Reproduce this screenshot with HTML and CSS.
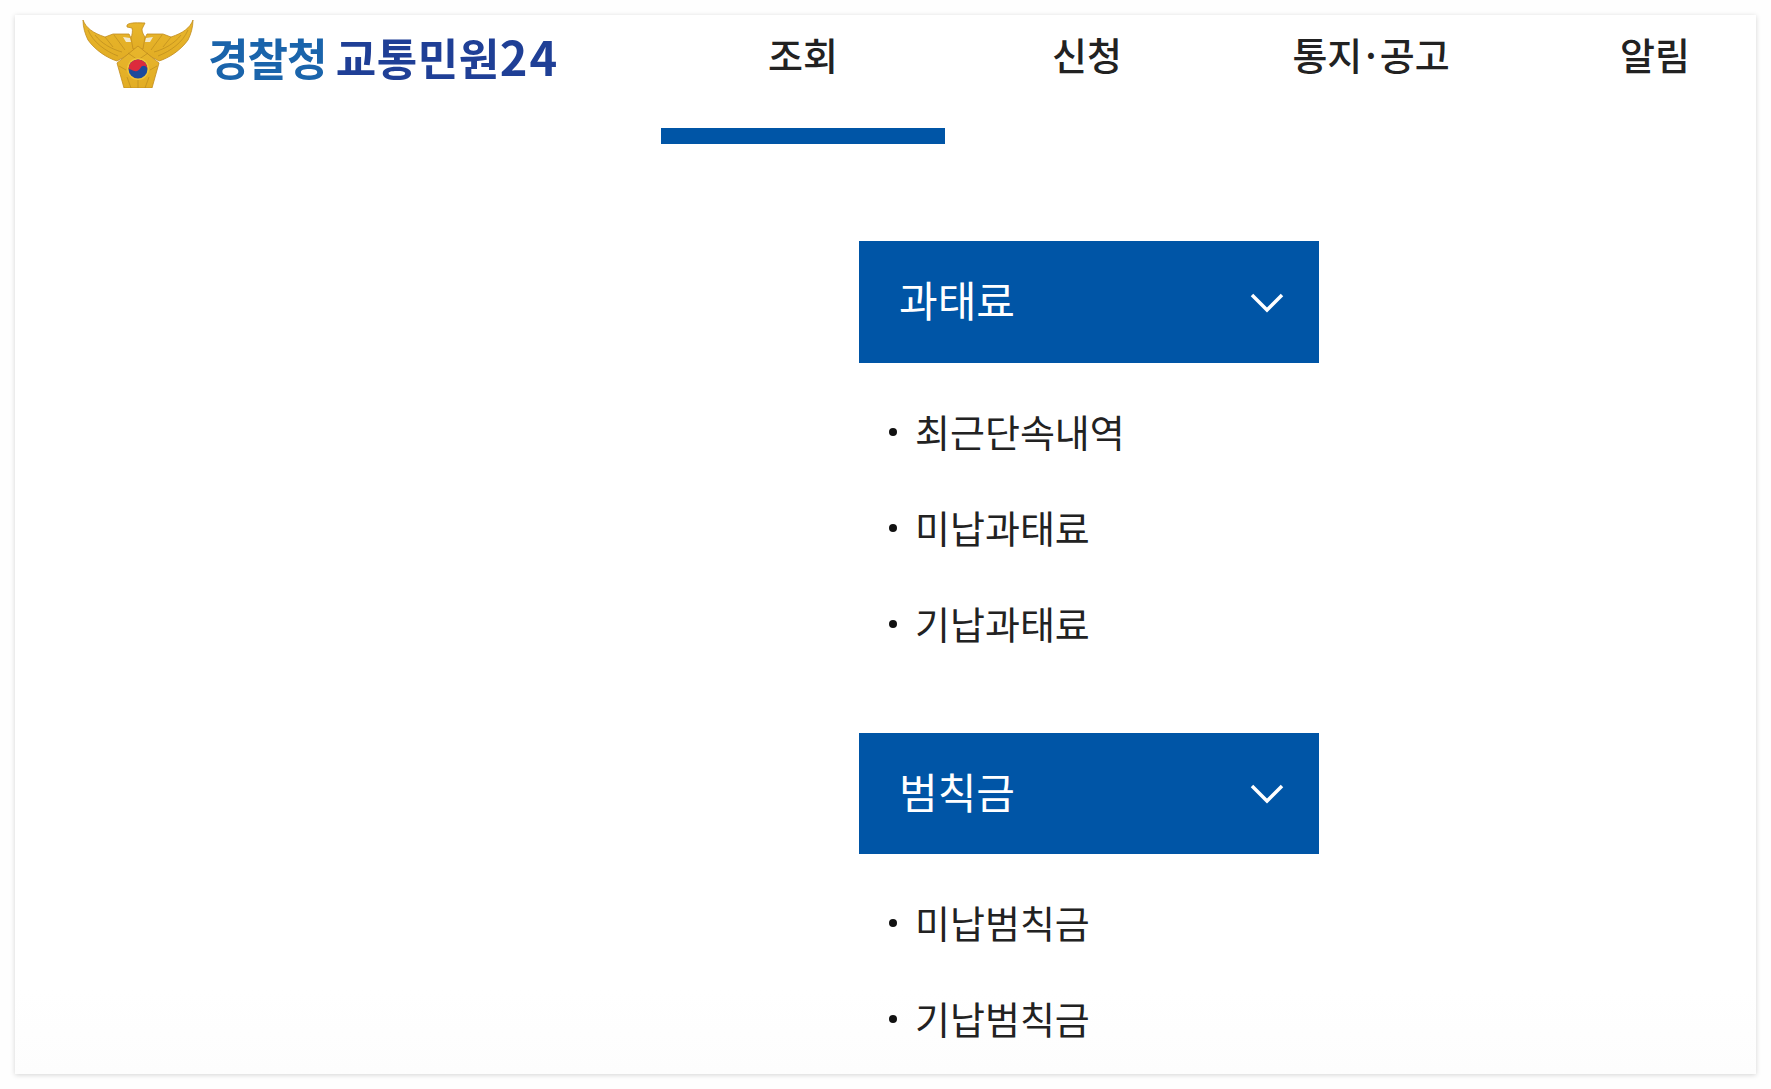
FILE: index.html
```html
<!DOCTYPE html>
<html lang="ko">
<head>
<meta charset="utf-8">
<title>경찰청 교통민원24</title>
<link rel="stylesheet" href="styles.css">
</head>
<body>
<main class="panel">
  <header class="header">
    <a class="logo" href="#">
      <svg class="emblem" viewBox="0 0 114 68" aria-hidden="true">
        <defs>
          <linearGradient id="gold" x1="0" y1="0" x2="0" y2="1">
            <stop offset="0" stop-color="#e8b62c"/>
            <stop offset="1" stop-color="#e2ad24"/>
          </linearGradient>
        </defs>
        <path class="wing" d="M2 0C5 8 12 13 24 17L32 14L48 14L56 30L36 41C26 38 14 30 7 20C4 14 2 7 2 0Z"/>
        <path class="wing" d="M112 0C109 8 102 13 90 17L82 14L66 14L58 30L78 41C88 38 100 30 107 20C110 14 112 7 112 0Z"/>
        <path class="feather" d="M7 10C12 22 24 31 37 36M14 15C20 23 30 29 41 32M24 17L32 27M33 15L44 30M107 10C102 22 90 31 77 36M100 15C94 23 84 29 73 32M90 17L82 27M81 15L70 30"/>
        <path class="gap" d="M42 17L49 18L50 22L45 22ZM72 17L65 18L64 22L69 22Z"/>
        <path class="wing" d="M46 5C49 2 58 3 64 3L61 9C61 12 62 14 64 17L62 29H52L50 18C51 15 52 11 51 8L46 7Z"/>
        <path class="wing shield" d="M57 26L78 43L71 68H43L36 43Z"/>
        <path class="feather" d="M47 33L57 40L67 33M38 46L45 50M76 46L69 50M46 57L50 68M68 57L64 68M57 60V68"/>
        <circle class="ring" cx="57" cy="49" r="11"/>
        <circle class="taeblue" cx="57" cy="49" r="9.5"/>
        <path class="taered" d="M47.5 49A9.5 9.5 0 0 1 66.5 49C65 45 61 45 59.5 48C58 51 55 52 52 50.5C50 49.7 48.5 48.5 47.5 49Z"/>
      </svg>
      <span class="logo-text"><span class="logo-org">경찰청</span> <span class="logo-name">교통민원<span class="logo-num">24</span></span></span>
    </a>
    <nav class="gnb">
      <a class="gnb-item is-active" href="#">조회</a>
      <a class="gnb-item" href="#">신청</a>
      <a class="gnb-item" href="#">통지<span class="gnb-dot">·</span>공고</a>
      <a class="gnb-item" href="#">알림</a>
    </nav>
  </header>

  <div class="menu">
    <section class="group">
      <h2 class="group-title"><span>과태료</span>
        <svg class="chevron" viewBox="0 0 34 20" aria-hidden="true"><path d="M2 2L17 17L32 2"/></svg>
      </h2>
      <ul class="links">
        <li>최근단속내역</li>
        <li>미납과태료</li>
        <li>기납과태료</li>
      </ul>
    </section>
    <section class="group">
      <h2 class="group-title"><span>범칙금</span>
        <svg class="chevron" viewBox="0 0 34 20" aria-hidden="true"><path d="M2 2L17 17L32 2"/></svg>
      </h2>
      <ul class="links">
        <li>미납범칙금</li>
        <li>기납범칙금</li>
      </ul>
    </section>
  </div>
</main>
</body>
</html>
```

FILE: styles.css
```css
* { box-sizing: border-box; }

html, body { height: 100%; }

body {
  margin: 0;
  padding: 15px;
  background: #fefefe;
  color: #222;
  font-family: "Noto Sans CJK KR", "Noto Sans", sans-serif;
}

.panel {
  height: 1059px;
  overflow: hidden;
  background: linear-gradient(#fff 92%, #fdfdfd);
  box-shadow: 0 1px 5px rgba(0, 0, 0, .17);
}

.header {
  display: flex;
  height: 129px;
}

.logo {
  display: flex;
  align-items: flex-start;
  gap: 14px;
  width: 646px;
  padding: 5px 0 0 66px;
  flex: none;
  text-decoration: none;
  filter: blur(.4px);
}

.emblem {
  width: 114px;
  height: 68px;
  flex: none;
}

.wing { fill: url(#gold); stroke: #c08c1e; stroke-width: .8; }
.feather { fill: none; stroke: #b4841c; stroke-width: .8; opacity: .75; }
.gap { fill: #f3ead0; }
.ring { fill: #f0c53a; }
.taeblue { fill: #1c4a9c; }
.taered { fill: #dc2b3c; }

.logo-text {
  display: block;
  margin: 5px 0 0 -1px;
  font-size: 44px;
  line-height: 62px;
  font-weight: 700;
  word-spacing: -3px;
  white-space: nowrap;
}

.logo-org { color: #1a64ab; letter-spacing: -1px; }
.logo-name { color: #1f3f96; letter-spacing: .5px; }
.logo-num { font-size: 47px; letter-spacing: 2px; }

.gnb {
  display: flex;
  flex: none;
}

.gnb-item {
  display: block;
  width: 284px;
  height: 129px;
  padding-top: 16px;
  color: #222;
  font-size: 38px;
  line-height: 46px;
  font-weight: 500;
  text-align: center;
  text-decoration: none;
}

.gnb-dot { margin: 0 3px; }

.gnb-item.is-active { border-bottom: 16px solid #0055a6; }

.menu {
  display: flex;
  flex-direction: column;
  gap: 62px;
  width: 460px;
  margin: 97px 0 0 844px;
}

.group-title {
  display: flex;
  align-items: center;
  justify-content: space-between;
  height: 122px;
  margin: 0;
  padding: 0 35px 0 40px;
  background: #0055a6;
  color: #fff;
  font-size: 42px;
  line-height: 1;
  font-weight: 400;
}

.group + .group .group-title { height: 121px; }

.group-title span { margin-top: -6px; }

.chevron {
  width: 34px;
  height: 20px;
  margin-top: 1px;
  fill: none;
  stroke: #fff;
  stroke-width: 3.5;
}

.links {
  margin: 0;
  padding: 20px 0 0;
  list-style: none;
}

.links li {
  position: relative;
  height: 96px;
  padding-left: 56px;
  font-size: 38px;
  line-height: 96px;
  color: #222;
}

.links li::before {
  content: "";
  position: absolute;
  left: 30px;
  top: 45px;
  width: 8px;
  height: 8px;
  border-radius: 50%;
  background: #111;
}
```
